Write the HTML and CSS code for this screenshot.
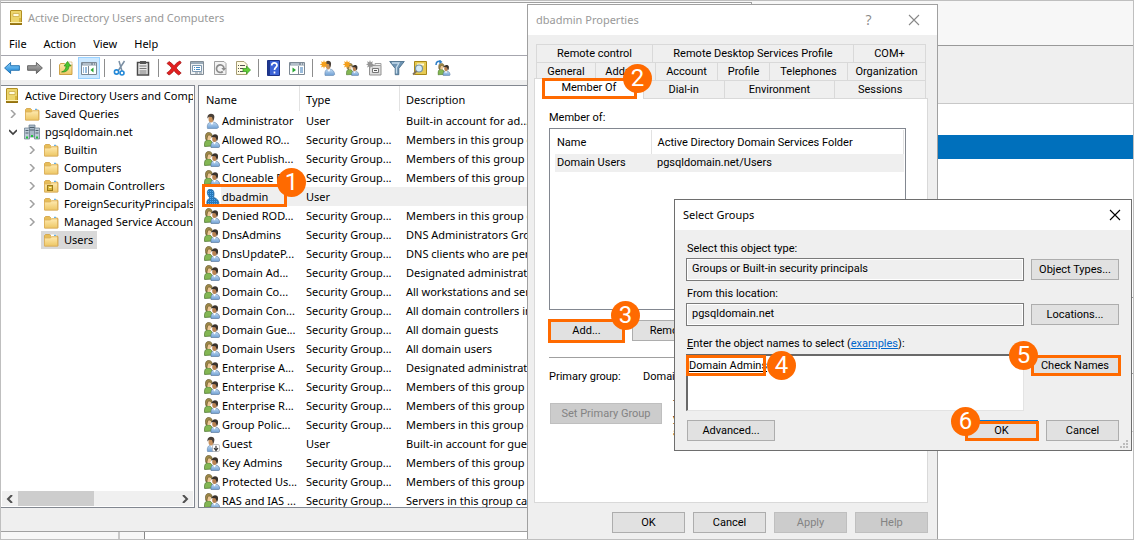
FILE: index.html
```html
<!DOCTYPE html>
<html lang="en">
<head>
<meta charset="utf-8">
<title>Active Directory Users and Computers</title>
<link rel="stylesheet" href="styles.css">
</head>
<body>
<svg class="sprites" aria-hidden="true">
  <defs>
    <linearGradient id="gBlue" x1="0" y1="0" x2="0" y2="1"><stop offset="0" stop-color="#8fd0f7"/><stop offset="1" stop-color="#1583d8"/></linearGradient>
    <linearGradient id="gGray" x1="0" y1="0" x2="0" y2="1"><stop offset="0" stop-color="#b5b5b5"/><stop offset="1" stop-color="#6d6d6d"/></linearGradient>
    <linearGradient id="gGold" x1="0" y1="0" x2="1" y2="1"><stop offset="0" stop-color="#fff0a0"/><stop offset="1" stop-color="#b98e14"/></linearGradient>
    <linearGradient id="gFold" x1="0" y1="0" x2="0" y2="1"><stop offset="0" stop-color="#ffeab0"/><stop offset="1" stop-color="#edc765"/></linearGradient>
    <linearGradient id="gBody" x1="0" y1="0" x2="0" y2="1"><stop offset="0" stop-color="#c4ddf4"/><stop offset="1" stop-color="#6f9fd3"/></linearGradient>
    <pattern id="pDots" width="2" height="2" patternUnits="userSpaceOnUse"><rect width="2" height="2" fill="#1677c9"/><rect width="1" height="1" fill="#5fa6dd"/><rect x="1" y="1" width="1" height="1" fill="#3a78a8"/></pattern>
    <symbol id="i-book" viewBox="0 0 16 16"><rect x="2.500" y=".5" width="11" height="14" rx="0.500" fill="#ecd56c" stroke="#b28f22"/><path d="M5 3.500h6v3H5z" fill="#fffbe0" stroke="#c8a63c" stroke-width=".7"/><path d="M11 8h2v4h-2z" fill="#d8b63f"/><path d="M2 12.500h12" stroke="#fff3b4"/><path d="M2 14h12" stroke="#8d6a08" stroke-width="1.600"/></symbol>
    <symbol id="i-folder" viewBox="0 0 16 16"><path d="M1.500 3.500l1-1h4l1 1h6.500v1h1v9.500H1.500z" fill="#e7bd58" stroke="#d0a040" stroke-width=".8"/><path d="M8 2.500h5.500v2H8z" fill="#fff"/><path d="M11 3.300h2" stroke="#3f9be0"/><path d="M1.500 6h6l1-1.200h6V14h-13z" fill="url(#gFold)" stroke="#dcb05a" stroke-width=".8"/></symbol>
    <symbol id="i-oufolder" viewBox="0 0 16 16"><use href="#i-folder"/><rect x="4.500" y="7.500" width="5" height="5" fill="#d9b63a" stroke="#9a7a1b"/><path d="M6 9.500h2.500" stroke="#fff3b4"/></symbol>
    <symbol id="i-domain" viewBox="0 0 16 16"><path d="M5 1h6v12H5z" fill="#a9b9c8" stroke="#66798a" stroke-width=".7"/><path d="M.5 4h5v11h-5zM10.500 4h5v11h-5z" fill="#bccad6" stroke="#66798a" stroke-width=".7"/><path d="M5.500 3.500h5M5.500 6h5M1.500 6.500h3M1.500 9h3M11.500 6.500h3M11.500 9h3" stroke="#50626f"/><path d="M2 12.500h2v2H2zM7 11h2v2H7zM12 12.500h2v2h-2z" fill="#22c43d"/></symbol>
    <symbol id="i-back" viewBox="0 0 16 16"><path d="M.6 8l6-5.500v3.200h8.800v4.600H6.600v3.200z" fill="url(#gBlue)" stroke="#1b6cae" stroke-width=".9"/></symbol>
    <symbol id="i-forward" viewBox="0 0 16 16"><path d="M15.400 8l-6-5.500v3.200H.6v4.600h8.800v3.200z" fill="url(#gGray)" stroke="#5b5b5b" stroke-width=".9"/></symbol>
    <symbol id="i-up" viewBox="0 0 16 16"><path d="M1.500 5l1-1.500h4l1 1H14V14.500H1.500z" fill="url(#gFold)" stroke="#c89a3a" stroke-width=".9"/><path d="M9 2h5v3H9z" fill="#fff" stroke="#c89a3a" stroke-width=".5"/><path d="M3.500 12C6.500 11 8 9 8 6H6L9.500 1.500 13 6h-2c0 4-3 6.500-7.500 6z" fill="#4bc42f" stroke="#278417" stroke-width=".6"/></symbol>
    <symbol id="i-tree" viewBox="0 0 16 16"><path d="M.5 2.500h15v12H.5z" fill="#fff" stroke="#7d8994"/><path d="M1 3h14v2.500H1z" fill="#8796a4"/><path d="M2 4h8" stroke="#dfe7ee"/><path d="M12 4h1M14 4h1" stroke="#fff"/><path d="M7.500 6v8" stroke="#7d8994"/><path d="M2 8h1M4 8h2M2 10h1M4 10h2M2 12h1M4 12h2" stroke="#3579b8"/><path d="M12.500 7.500v5L9.500 10z" fill="#27a62f"/></symbol>
    <symbol id="i-cut" viewBox="0 0 16 16"><path d="M12.500 1L6 11M7 1l3 10" stroke="#7b8fa3" stroke-width="1.500" fill="none"/><circle cx="4.500" cy="12" r="2.100" fill="none" stroke="#2489d8" stroke-width="1.600"/><circle cx="10" cy="13" r="2" fill="none" stroke="#2489d8" stroke-width="1.600"/></symbol>
    <symbol id="i-clip" viewBox="0 0 16 16"><path d="M2.500 2.500h11v12.500h-11z" fill="#e9e9e9" stroke="#4a4a4a" stroke-width="1.500"/><path d="M5 1h6v3H5z" fill="#555"/><path d="M4.500 6h7M4.500 8.500h7M4.500 11h7M4.500 13h7" stroke="#777"/></symbol>
    <symbol id="i-delete" viewBox="0 0 16 16"><path d="M3 1.500c2 1 3.500 2.500 5 4.300C9.500 4 11.500 2 14 1l1.200 2c-2 1.200-3.700 3-5 5 1.300 1.800 3 3.500 5 5L12.800 15C11 14 9.500 12.500 8 10.500 6.500 12.500 5 14 3 15L.8 13c2-1.300 3.700-3 5-5C4.500 6.200 2.800 4.700 1 3.500z" fill="#e32020" stroke="#a01010" stroke-width=".7"/></symbol>
    <symbol id="i-props" viewBox="0 0 16 16"><path d="M1.500 1.500h13v13h-13z" fill="#eef2f5" stroke="#838d96"/><path d="M2 3h12" stroke="#9aabb9" stroke-width="2"/><path d="M3.500 5.500h9v6h-9z" fill="#fff" stroke="#7f99b0"/><path d="M5 7.500h1M7 7.500h4M5 9.500h1M7 9.500h4" stroke="#458dc8"/><path d="M6 13h3M10 13h3" stroke="#7d8994"/></symbol>
    <symbol id="i-refresh" viewBox="0 0 16 16"><path d="M2.500 1.500H12l2 2v11H2.500z" fill="#f3f3f3" stroke="#a0a0a0"/><path d="M10.800 11.500A3.800 3.800 0 1 1 12 8" fill="none" stroke="#8c8c8c" stroke-width="1.700"/><path d="M9.300 8h5l-2.500 3z" fill="#8c8c8c"/></symbol>
    <symbol id="i-export" viewBox="0 0 16 16"><path d="M1.500 1.500H9l3 3v10H1.500z" fill="#fffbe2" stroke="#a79d74"/><path d="M3 5.500h1M5 5.500h5M3 8.500h1M5 8.500h3M3 11.500h1M5 11.500h3" stroke="#555"/><path d="M8 8.500h3.500V6l4 4-4 4v-2.500H8z" fill="#62ce37" stroke="#2d931b" stroke-width=".7"/></symbol>
    <symbol id="i-help" viewBox="0 0 16 16"><path d="M1.500.5h12v15h-12z" fill="#3c63d6" stroke="#1c3186"/><path d="M2 1h2v14H2z" fill="#1d378f"/><path d="M5.700 5.500c0-3.500 5.300-3.300 5.300-.3 0 2.300-2.500 2.200-2.500 4.800M8.500 11.500v2" fill="none" stroke="#fff" stroke-width="1.700"/></symbol>
    <symbol id="i-pane" viewBox="0 0 16 16"><path d="M.5 2.500h15v12H.5z" fill="#fff" stroke="#7d8994"/><path d="M1 3h14v2.500H1z" fill="#8796a4"/><path d="M2 4h8" stroke="#dfe7ee"/><path d="M12 4h1M14 4h1" stroke="#fff"/><path d="M9.500 6v8" stroke="#7d8994"/><path d="M11 8h3M11 10h3M11 12h3" stroke="#3579b8"/><path d="M3.500 7.500v5l3.500-2.500z" fill="#27a62f"/></symbol>
    <symbol id="i-user" viewBox="0 0 16 16"><path d="M3.500 15.500c-.8-4 1-6.500 4-6.500h1.500c3 .2 5.300 2.500 5.500 5.500l-1.500 1z" fill="url(#gBody)" stroke="#5f83ab" stroke-width=".6"/><path d="M6 9l2 3 1.500-2.700z" fill="#fff"/><ellipse cx="7" cy="6" rx="2.500" ry="3.400" fill="#c9935e"/><path d="M3.500 5.500C2.500-.2 9.500-.5 10.300 3c.2 2-.3 3.800-1.300 5-.2-2-.6-3-1.200-4L5 3.800z" fill="#4a4038"/></symbol>
    <symbol id="i-userdot" viewBox="0 0 16 16"><path d="M3 15.500c-.8-4 1-5.500 3-6.500C3 6.500 2 .5 6 .3c4.500-.2 4.500 5 3.500 8 3 1 5.300 3 5.500 6.200l-1.500 1z" fill="url(#pDots)" stroke="#17629f" stroke-width=".7"/></symbol>
    <symbol id="i-guest" viewBox="0 0 16 16"><use href="#i-user"/><rect x="8.500" y="8.500" width="7" height="7" rx="1.500" fill="#fff" stroke="#aaa" stroke-width=".7"/><path d="M12 9.800V14M10 12l2 2.500 2-2.500" stroke="#333" fill="none" stroke-width="1.200"/></symbol>
    <symbol id="i-group" viewBox="0 0 16 16"><path d="M.6 14.500C0 10 1.500 8 4 7.800c3 0 4.500 2 4.800 6.200z" fill="#83b653" stroke="#47702b" stroke-width=".7"/><ellipse cx="4.700" cy="5" rx="2.300" ry="3.100" fill="#edc795"/><path d="M1.800 7.500C.7 2 2.500.4 5 .5c2.500.1 3.500 2 3 4.500C7 3.500 6 2.800 4.500 3 3.500 4 3 5.500 3 8z" fill="#a08a48" stroke="#5b4d25" stroke-width=".6"/><path d="M7 15.500c-.6-3.500.8-5.500 3-5.500h1.500c2.500.2 4.200 2 4.300 4.700l-1 .8z" fill="url(#gBody)" stroke="#506f94" stroke-width=".6"/><path d="M9 10l1.500 2.500L12 10z" fill="#fff"/><ellipse cx="10.500" cy="7" rx="2.300" ry="3" fill="#ba8353"/><path d="M7.500 6.300C7.300 1.700 13.500 1.200 14 4.500c.2 2-.2 3.500-1.200 4.700C12.500 7.500 12 6.300 11.300 5.300L8.500 5z" fill="#39322c"/></symbol>
    <symbol id="i-star" viewBox="0 0 16 16"><path d="M4 0l.8 2.300L7 1.200 6 3.500l2.300.8L6 5.200l1 2.200-2.200-1L4 8.700l-.8-2.300L1 7.400l1-2.200L-.3 4.300 2 3.500 1 1.200l2.200 1.100z" fill="#f5a01c"/></symbol>
    <symbol id="i-newuser" viewBox="0 0 16 16"><svg x="2" y="0" width="14" height="16" preserveAspectRatio="none" viewBox="0 0 16 16"><use href="#i-user"/></svg><use href="#i-star"/></symbol>
    <symbol id="i-newgroup" viewBox="0 0 16 16"><svg x="3" y="3" width="13" height="13" viewBox="0 0 16 16"><use href="#i-group"/></svg><use href="#i-star"/></symbol>
    <symbol id="i-newou" viewBox="0 0 16 16"><path d="M3.500 5.500H15v9.500H3.500z" fill="#dedede" stroke="#929292"/><path d="M9 3.500h6v2H9z" fill="#f5f5f5" stroke="#a0a0a0"/><path d="M6.500 8.500h6v4h-6z" fill="#f7f7f7" stroke="#777"/><path d="M8 10.500h3" stroke="#555"/><path d="M4 0l.8 2.300L7 1.200 6 3.500l2.300.8L6 5.200l1 2.200-2.200-1L4 8.700l-.8-2.300L1 7.400l1-2.200L0 4.300 2 3.500 1 1.200l2.200 1.100z" fill="#959595"/></symbol>
    <symbol id="i-filter" viewBox="0 0 16 16"><path d="M.7 1.500h14.600L9.800 8.500v6.200H6.200V8.500z" fill="#6f95b4" stroke="#416784" stroke-width=".8"/><path d="M3 3h7L7.500 7.500v6" fill="none" stroke="#c6dcec" stroke-width="1.300"/></symbol>
    <symbol id="i-find" viewBox="0 0 16 16"><path d="M2.500 1.500h12v13h-12z" fill="#e6cb55" stroke="#a88718"/><path d="M5 3.500h7v2H5z" fill="#fff9d6"/><circle cx="7" cy="8.500" r="3.500" fill="#d3ebfa" stroke="#7692a7" stroke-width="1.200"/><path d="M4.500 11L1 14.500" stroke="#80715b" stroke-width="1.800"/></symbol>
    <symbol id="i-addto" viewBox="0 0 16 16"><svg x="2" y="3" width="14" height="13" viewBox="0 0 16 16"><use href="#i-group"/></svg><path d="M1 5C1 1.500 3 1 5.500 1.500" fill="none" stroke="#2e7fc7" stroke-width="1.500"/><path d="M4.500-.5L7.500 2l-3.300 2z" fill="#2e7fc7"/></symbol>
    <symbol id="i-right" viewBox="0 0 8 8"><path d="M2 0l4 4-4 4" fill="none" stroke="currentColor" stroke-width="1.500"/></symbol>
    <symbol id="i-down" viewBox="0 0 8 8"><path d="M0 2l4 4 4-4" fill="none" stroke="currentColor" stroke-width="1.700"/></symbol>
    <symbol id="i-left" viewBox="0 0 8 8"><path d="M6 0L2 4l4 4" fill="none" stroke="currentColor" stroke-width="2"/></symbol>
    <symbol id="i-rightb" viewBox="0 0 8 8"><path d="M2 0l4 4-4 4" fill="none" stroke="currentColor" stroke-width="2"/></symbol>
    <symbol id="i-close" viewBox="0 0 12 12"><path d="M1 1l10 10M11 1L1 11" stroke="currentColor" stroke-width="1.100"/></symbol>
  </defs>
</svg>

<main class="desktop">
  <div class="backdrop">
    <div class="back-title"></div>
    <div class="back-tools"></div>
    <div class="back-row"></div>
    <div class="back-selected"></div>
    <div class="back-row back-row-tall"></div>
    <div class="back-row back-row-mid"></div>
    <div class="back-row back-row-short"></div>
    <div class="back-foot"><span class="back-cell"></span><span class="back-cell back-cell-small"></span><span class="back-rest"></span></div>
  </div>

  <section class="window console">
    <header class="console-title"><svg class="icon"><use href="#i-book"/></svg><h1 class="caption">Active Directory Users and Computers</h1></header>
    <nav class="menu">
      <button class="menu-item">File</button><button class="menu-item">Action</button><button class="menu-item">View</button><button class="menu-item">Help</button>
    </nav>
    <div class="toolbar">
      <button class="tool" aria-label="Back"><svg class="icon"><use href="#i-back"/></svg></button>
      <button class="tool" aria-label="Forward"><svg class="icon"><use href="#i-forward"/></svg></button>
      <span class="tool-sep"></span>
      <button class="tool" aria-label="Up one level"><svg class="icon"><use href="#i-up"/></svg></button>
      <button class="tool tool-on" aria-label="Show console tree"><svg class="icon"><use href="#i-tree"/></svg></button>
      <span class="tool-sep"></span>
      <button class="tool" aria-label="Cut"><svg class="icon"><use href="#i-cut"/></svg></button>
      <button class="tool" aria-label="Paste"><svg class="icon"><use href="#i-clip"/></svg></button>
      <span class="tool-sep"></span>
      <button class="tool" aria-label="Delete"><svg class="icon"><use href="#i-delete"/></svg></button>
      <button class="tool" aria-label="Properties"><svg class="icon"><use href="#i-props"/></svg></button>
      <button class="tool" aria-label="Refresh"><svg class="icon"><use href="#i-refresh"/></svg></button>
      <button class="tool" aria-label="Export list"><svg class="icon"><use href="#i-export"/></svg></button>
      <span class="tool-sep"></span>
      <button class="tool" aria-label="Help"><svg class="icon"><use href="#i-help"/></svg></button>
      <button class="tool" aria-label="Show action pane"><svg class="icon"><use href="#i-pane"/></svg></button>
      <span class="tool-sep"></span>
      <button class="tool" aria-label="New user"><svg class="icon"><use href="#i-newuser"/></svg></button>
      <button class="tool" aria-label="New group"><svg class="icon"><use href="#i-newgroup"/></svg></button>
      <button class="tool" aria-label="New organizational unit"><svg class="icon"><use href="#i-newou"/></svg></button>
      <button class="tool" aria-label="Filter"><svg class="icon"><use href="#i-filter"/></svg></button>
      <button class="tool" aria-label="Find"><svg class="icon"><use href="#i-find"/></svg></button>
      <button class="tool" aria-label="Add to group"><svg class="icon"><use href="#i-addto"/></svg></button>
    </div>
    <div class="panes">
      <div class="tree-pane">
        <ul class="tree">
          <li class="node node-root"><svg class="icon"><use href="#i-book"/></svg><span class="node-text">Active Directory Users and Computers</span></li>
          <li class="node"><svg class="chevron"><use href="#i-right"/></svg><svg class="icon"><use href="#i-folder"/></svg><span class="node-text">Saved Queries</span></li>
          <li class="node"><svg class="chevron chevron-open"><use href="#i-down"/></svg><svg class="icon"><use href="#i-domain"/></svg><span class="node-text">pgsqldomain.net</span></li>
          <li class="node node-sub"><svg class="chevron"><use href="#i-right"/></svg><svg class="icon"><use href="#i-folder"/></svg><span class="node-text">Builtin</span></li>
          <li class="node node-sub"><svg class="chevron"><use href="#i-right"/></svg><svg class="icon"><use href="#i-folder"/></svg><span class="node-text">Computers</span></li>
          <li class="node node-sub"><svg class="chevron"><use href="#i-right"/></svg><svg class="icon"><use href="#i-oufolder"/></svg><span class="node-text">Domain Controllers</span></li>
          <li class="node node-sub"><svg class="chevron"><use href="#i-right"/></svg><svg class="icon"><use href="#i-folder"/></svg><span class="node-text">ForeignSecurityPrincipals</span></li>
          <li class="node node-sub"><svg class="chevron"><use href="#i-right"/></svg><svg class="icon"><use href="#i-folder"/></svg><span class="node-text">Managed Service Accounts</span></li>
          <li class="node node-leaf"><span class="node-selected"><svg class="icon"><use href="#i-folder"/></svg><span class="node-text">Users</span></span></li>
        </ul>
        <div class="scrollbar"><svg class="chevron"><use href="#i-left"/></svg><span class="track"><span class="thumb"></span></span><svg class="chevron"><use href="#i-rightb"/></svg></div>
      </div>
      <div class="list-pane">
        <table class="objects">
          <thead><tr><th class="col-name">Name</th><th class="col-type">Type</th><th>Description</th></tr></thead>
          <tbody>
            <tr><td class="name"><svg class="icon"><use href="#i-user"/></svg>Administrator</td><td>User</td><td>Built-in account for ad...</td></tr>
            <tr><td class="name"><svg class="icon"><use href="#i-group"/></svg>Allowed RO...</td><td>Security Group...</td><td>Members in this group can...</td></tr>
            <tr><td class="name"><svg class="icon"><use href="#i-group"/></svg>Cert Publish...</td><td>Security Group...</td><td>Members of this group are...</td></tr>
            <tr><td class="name"><svg class="icon"><use href="#i-group"/></svg>Cloneable D...</td><td>Security Group...</td><td>Members of this group that...</td></tr>
            <tr class="selected"><td class="name"><svg class="icon"><use href="#i-userdot"/></svg>dbadmin</td><td>User</td><td></td></tr>
            <tr><td class="name"><svg class="icon"><use href="#i-group"/></svg>Denied ROD...</td><td>Security Group...</td><td>Members in this group can...</td></tr>
            <tr><td class="name"><svg class="icon"><use href="#i-group"/></svg>DnsAdmins</td><td>Security Group...</td><td>DNS Administrators Group</td></tr>
            <tr><td class="name"><svg class="icon"><use href="#i-group"/></svg>DnsUpdateP...</td><td>Security Group...</td><td>DNS clients who are permi...</td></tr>
            <tr><td class="name"><svg class="icon"><use href="#i-group"/></svg>Domain Ad...</td><td>Security Group...</td><td>Designated administrators...</td></tr>
            <tr><td class="name"><svg class="icon"><use href="#i-group"/></svg>Domain Co...</td><td>Security Group...</td><td>All workstations and serve...</td></tr>
            <tr><td class="name"><svg class="icon"><use href="#i-group"/></svg>Domain Con...</td><td>Security Group...</td><td>All domain controllers in t...</td></tr>
            <tr><td class="name"><svg class="icon"><use href="#i-group"/></svg>Domain Gue...</td><td>Security Group...</td><td>All domain guests</td></tr>
            <tr><td class="name"><svg class="icon"><use href="#i-group"/></svg>Domain Users</td><td>Security Group...</td><td>All domain users</td></tr>
            <tr><td class="name"><svg class="icon"><use href="#i-group"/></svg>Enterprise A...</td><td>Security Group...</td><td>Designated administrators...</td></tr>
            <tr><td class="name"><svg class="icon"><use href="#i-group"/></svg>Enterprise K...</td><td>Security Group...</td><td>Members of this group can...</td></tr>
            <tr><td class="name"><svg class="icon"><use href="#i-group"/></svg>Enterprise R...</td><td>Security Group...</td><td>Members of this group are...</td></tr>
            <tr><td class="name"><svg class="icon"><use href="#i-group"/></svg>Group Polic...</td><td>Security Group...</td><td>Members in this group can...</td></tr>
            <tr><td class="name"><svg class="icon"><use href="#i-guest"/></svg>Guest</td><td>User</td><td>Built-in account for guest...</td></tr>
            <tr><td class="name"><svg class="icon"><use href="#i-group"/></svg>Key Admins</td><td>Security Group...</td><td>Members of this group can...</td></tr>
            <tr><td class="name"><svg class="icon"><use href="#i-group"/></svg>Protected Us...</td><td>Security Group...</td><td>Members of this group are...</td></tr>
            <tr><td class="name"><svg class="icon"><use href="#i-group"/></svg>RAS and IAS ...</td><td>Security Group...</td><td>Servers in this group can...</td></tr>
          </tbody>
        </table>
      </div>
    </div>
    <footer class="status"></footer>
  </section>

  <section class="window dialog properties">
    <header class="dialog-title"><h2 class="caption">dbadmin Properties</h2><button class="title-btn" aria-label="Context help">?</button><button class="title-btn" aria-label="Close"><svg class="close"><use href="#i-close"/></svg></button></header>
    <div class="sheet">
      <div class="tabs">
        <div class="tab-row tab-row-a"><button class="tab">Remote control</button><button class="tab">Remote Desktop Services Profile</button><button class="tab">COM+</button></div>
        <div class="tab-row tab-row-b"><button class="tab">General</button><button class="tab">Address</button><button class="tab">Account</button><button class="tab">Profile</button><button class="tab">Telephones</button><button class="tab">Organization</button></div>
        <div class="tab-row tab-row-c"><button class="tab tab-active">Member Of</button><button class="tab">Dial-in</button><button class="tab">Environment</button><button class="tab">Sessions</button></div>
      </div>
      <div class="page">
        <h3 class="label">Member of:</h3>
        <div class="members-box">
          <table class="members">
            <thead><tr><th class="col-member">Name</th><th>Active Directory Domain Services Folder</th></tr></thead>
            <tbody><tr><td>Domain Users</td><td>pgsqldomain.net/Users</td></tr></tbody>
          </table>
        </div>
        <div class="page-buttons"><button class="btn">Add...</button><button class="btn">Remove</button></div>
        <hr class="rule">
        <div class="primary"><span>Primary group:</span><span>Domain Users</span></div>
        <div class="primary-set"><button class="btn btn-wide" disabled>Set Primary Group</button><p class="note">There is no need to change Primary group unless<br>you have Macintosh clients or POSIX-compliant<br>applications.</p></div>
      </div>
      <div class="sheet-buttons"><button class="btn">OK</button><button class="btn">Cancel</button><button class="btn" disabled>Apply</button><button class="btn" disabled>Help</button></div>
    </div>
  </section>

  <section class="window dialog select">
    <header class="dialog-title"><h2 class="caption">Select Groups</h2><button class="title-btn" aria-label="Close"><svg class="close"><use href="#i-close"/></svg></button></header>
    <form class="form">
      <label class="field-label" for="type">Select this object type:</label>
      <input class="field" id="type" value="Groups or Built-in security principals" readonly>
      <button class="btn" type="button">Object Types...</button>
      <label class="field-label" for="location">From this location:</label>
      <input class="field" id="location" value="pgsqldomain.net" readonly>
      <button class="btn" type="button">Locations...</button>
      <div class="field-label names-label"><label for="names"><u>E</u>nter the object names to select</label> (<a class="link" href="#examples">examples</a>):</div>
      <textarea class="names" id="names" spellcheck="false">Domain Admins</textarea>
      <button class="btn" type="button">Check Names</button>
      <div class="form-buttons"><button class="btn btn-advanced" type="button">Advanced...</button><button class="btn btn-default" type="button">OK</button><button class="btn" type="button">Cancel</button></div>
    </form>
    <svg class="grip" viewBox="0 0 8 8"><path d="M6 0h2v2H6zM3 3h2v2H3zM6 3h2v2H6zM0 6h2v2H0zM3 6h2v2H3zM6 6h2v2H6z" fill="#bdbdbd"/></svg>
  </section>

  <span class="mark mark-1"></span><span class="badge badge-1">1</span>
  <span class="mark mark-2"></span><span class="badge badge-2">2</span>
  <span class="mark mark-3"></span><span class="badge badge-3">3</span>
  <span class="mark mark-4"></span><span class="badge badge-4">4</span>
  <span class="mark mark-5"></span><span class="badge badge-5">5</span>
  <span class="mark mark-6"></span><span class="badge badge-6">6</span>
</main>
</body>
</html>
```
FILE: styles.css
```css
* { box-sizing: border-box; }

body {
  margin: 0;
  color: #000;
  font: 11px/18px "Noto Sans", "Open Sans", sans-serif;
}

button, input, textarea {
  margin: 0;
  padding: 0;
  border: 0;
  border-radius: 0;
  background: none;
  color: inherit;
  font: inherit;
}

h1, h2, h3, p, ul { margin: 0; padding: 0; font: inherit; list-style: none; }
table { border-collapse: collapse; table-layout: fixed; width: 100%; }
th, td { padding: 0; font-weight: 400; text-align: left; white-space: nowrap; overflow: hidden; }

.sprites { position: absolute; width: 0; height: 0; }
.icon { flex: none; width: 16px; height: 16px; }
.chevron { flex: none; width: 8px; height: 8px; color: #a0a0a0; }
.chevron-open { color: #404040; }

.desktop {
  position: relative;
  height: 100vh;
  overflow: hidden;
  border: 1px solid #bfbfbf;
  background: #fff;
}

/* Application behind the windows */
.backdrop { display: flex; flex-direction: column; height: 100%; }
.back-title { height: 45px; border-bottom: 1px solid #999; background: #f7f7f7; }
.back-tools { height: 58px; border-bottom: 1px solid #c8c8c8; background: #efefef; }
.back-row { height: 31px; }
.back-selected { height: 24px; background: #0070bc; }
.back-row-tall { height: 139px; border-bottom: 1px solid #999; }
.back-row-mid { height: 76px; border-bottom: 1px solid #999; }
.back-row-short { height: 58px; border-bottom: 1px solid #ccc; }
.back-foot { display: flex; flex: 1; }
.back-cell { width: 119px; border-right: 2px solid #c8c8c8; background: #f7f7f7; }
.back-cell-small { width: 25px; border-right: 1px solid #888; }
.back-rest { flex: 1; }

.window { position: absolute; isolation: isolate; display: flex; flex-direction: column; border: 1px solid #a0a0a0; background: #efefef; }
.caption { flex: 1; color: #999; font-size: 11px; }

/* Management console */
.console { top: 1px; bottom: 7px; left: -1px; width: 752px; padding-left: 1px; border-left: 0; }
.console-title { display: flex; align-items: center; gap: 4px; height: 30px; padding-left: 7px; background: #fff; }
.menu { display: flex; height: 23px; gap: 17px; padding: 2px 8px 0; border-bottom: 1px solid #a6a6ae; background: #fff; }
.menu-item { height: 18px; }
.toolbar { display: flex; gap: 1px; height: 24px; padding-top: 1px; background: #fff; }
.tool { display: flex; align-items: center; justify-content: center; width: 22px; height: 22px; border: 1px solid transparent; }
.tool .icon { margin: 0 -1px; }
.tool-on { border-color: #99d1ff; background: #cce8ff; }
.tool-sep { width: 7px; height: 18px; margin-top: 2px; background: linear-gradient(#8d8d8d, #8d8d8d) center / 1px 100% no-repeat; }
.panes { display: flex; flex: 1; gap: 3px; min-height: 0; margin-top: 5px; }
.tree-pane { display: flex; flex-direction: column; width: 194px; overflow: hidden; padding: 1px; border: 1px solid #828790; border-left: 0; background: #fff; }
.tree { flex: 1; }
.node { display: flex; align-items: center; height: 18px; padding-left: 7px; white-space: nowrap; }
.node .chevron { margin-right: 7px; }
.node-text { min-width: 0; overflow: hidden; margin-left: 5px; }
.node-root { padding-left: 2px; }
.node-sub { padding-left: 26px; }
.node-leaf { padding-left: 39px; }
.node-selected { display: flex; align-items: center; padding: 0 4px 0 2px; background: #d9d9d9; }
.scrollbar { display: flex; align-items: center; gap: 4px; height: 15px; padding: 0 4px; background: #f0f0f0; }
.scrollbar .chevron { color: #505050; }
.track { flex: 1; height: 100%; }
.thumb { display: block; width: 48%; height: 100%; background: #cdcdcd; }
.list-pane { flex: 1; min-width: 0; overflow: hidden; border: 1px solid #828790; background: #fff; }
.objects { line-height: 19px; }
.objects th { height: 25px; padding: 1px 0 0 6px; background: linear-gradient(#e2e2e2, #e2e2e2) left / 1px 100% no-repeat; }
.objects td { height: 19px; padding-left: 7px; }
.objects .col-name { width: 100px; padding-left: 7px; background: none; }
.objects .col-type { width: 100px; }
.objects th + th { padding-left: 7px; }
.objects .name { display: flex; align-items: center; gap: 2px; padding-left: 5px; }
.selected td { background: #efefef; }
.selected .name { background: linear-gradient(90deg, #fff 22px, #efefef 22px); }
.status { height: 23px; }

/* Dialogs */
.dialog { font: 11px/14px Roboto, "Liberation Sans", sans-serif; }
.dialog .caption { font-family: "Noto Sans", "Open Sans", sans-serif; }
.dialog-title { display: flex; align-items: center; height: 30px; padding: 0 1px 0 8px; background: #fff; }
.title-btn { display: flex; align-items: center; justify-content: center; width: 45px; height: 28px; color: #888; font: 14px/18px "Open Sans", sans-serif; }
.close { width: 12px; height: 12px; }

.btn { width: 73px; height: 21px; border: 1px solid #adadad; background: #e1e1e1; white-space: nowrap; }
.btn:disabled { border-color: #bfbfbf; background: #ccc; color: #838383; }

.properties { top: 3px; bottom: -1px; left: 526px; width: 411px; border-bottom: 0; }
.sheet { display: flex; flex: 1; flex-direction: column; padding: 9px 9px 7px 6px; }
.tabs { padding: 0 2px; }
.tab-row { display: grid; height: 18px; }
.tab-row-a { grid-template-columns: 116fr 201fr 73fr; }
.tab-row-b { grid-template-columns: 59fr 60fr 62fr 52fr 78fr 79fr; }
.tab-row-c { grid-template-columns: 107fr 81fr 111fr 92fr; }
.tab { border: 1px solid #d9d9d9; border-bottom: 0; border-right: 0; padding-top: 1px; white-space: nowrap; }
.tab:last-child { border-right: 1px solid #d9d9d9; }
.tab-active { z-index: 1; margin: -2px 0 -1px -2px; padding: 0 0 2px; background: #fff; }
.page { flex: 1; margin-bottom: 9px; padding: 12px 21px 0 14px; border: 1px solid #d9d9d9; background: #fff; }
.members-box { height: 182px; margin-top: 3px; padding: 1px; border: 1px solid #828790; }
.members th { height: 24px; padding: 2px 0 0 6px; border-right: 1px solid #e2e2e2; }
.members .col-member { width: 100px; }
.members td { height: 18px; padding-left: 6px; background: #efefef; }
.members td:first-child { background: linear-gradient(90deg, #fff 4px, #efefef 4px); }
.page-buttons { display: flex; gap: 8px; margin-top: 10px; }
.page-buttons .btn { width: 75px; }
.rule { height: 1px; margin: 16px 0 12px; border: 0; background: #a0a0a0; }
.primary { display: grid; grid-template-columns: 94px 1fr; }
.primary-set { display: grid; grid-template-columns: 112px 1fr; gap: 11px; align-items: start; margin: 19px 0 0 1px; }
.primary-set .btn { width: 100%; }
.note { margin-top: -5px; white-space: nowrap; }
.sheet-buttons { display: flex; justify-content: flex-end; gap: 8px; }

.select { top: 198px; left: 673px; width: 458px; border-color: #6e6e6e; }
.select .caption { color: #000; }
.select .title-btn { width: 30px; color: #000; }
.form { display: grid; grid-template-columns: 1fr 88px; column-gap: 7px; padding: 10px 12px 9px 11px; }
.field-label { grid-column: 1 / -1; height: 18px; padding: 2px 0 0 1px; }
.field { height: 23px; margin-bottom: 4px; padding: 0 5px 3px; border: 1px solid #7a7a7a; box-shadow: inset 0 0 0 1px #fff; outline: 0; }
.form .btn { width: 100%; margin-top: 1px; }
.names-label { height: 24px; padding-top: 7px; }
.names { height: 57px; padding: 3px 1px; border: solid; border-width: 2px 1px 1px 2px; border-color: #696969 #e3e3e3 #e3e3e3 #696969; background: #fff; resize: none; text-decoration: underline; text-underline-offset: 2px; outline: 0; }
.link { color: #0066cc; }
.form-buttons { display: grid; grid-column: 1 / -1; grid-template-columns: 88px 1fr 73px 73px; column-gap: 8px; margin-top: 8px; padding-left: 1px; }
.btn-default { grid-column: 3; border: 2px solid #0078d7; }
.grip { position: absolute; right: 3px; bottom: 2px; width: 8px; height: 8px; }

/* Step callouts over the windows */
.mark { position: absolute; border: 3px solid #ff6a00; }
.badge { position: absolute; width: 29px; height: 29px; border-radius: 50%; background: #ff6a00; color: #fff; font: 24px/29px Roboto, sans-serif; text-align: center; }
.mark-1 { top: 183px; left: 201px; width: 85px; height: 23px; }
.badge-1 { top: 167px; left: 276px; }
.mark-2 { top: 77px; left: 541px; width: 95px; height: 21px; }
.badge-2 { top: 63px; left: 622px; }
.mark-3 { top: 318px; left: 547px; width: 77px; height: 24px; }
.badge-3 { top: 300px; left: 610px; }
.mark-4 { top: 354px; left: 685px; width: 80px; height: 21px; }
.badge-4 { top: 350px; left: 766px; }
.mark-5 { top: 354px; left: 1030px; width: 90px; height: 21px; }
.badge-5 { top: 340px; left: 1008px; }
.mark-6 { top: 420px; left: 964px; width: 74px; height: 20px; }
.badge-6 { top: 406px; left: 950px; }
```
